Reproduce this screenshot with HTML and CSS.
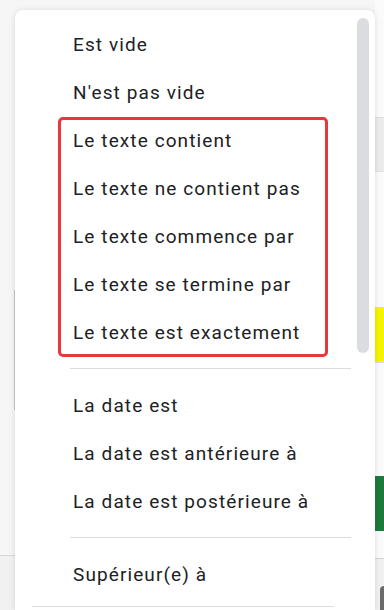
FILE: index.html
```html
<!DOCTYPE html>
<html lang="fr">
<head>
    <meta charset="UTF-8">
    <meta name="viewport" content="width=device-width, initial-scale=1.0">
    <title>Conditions de filtre</title>
    <link rel="stylesheet" href="styles.css">
</head>
<body>
    <div class="sheet-left">
        <div class="gap" style="height: 290px"></div>
        <div class="v-rule"></div>
        <div class="gap" style="height: 145px"></div>
        <div class="footer-band"></div>
    </div>

    <div class="menu">
        <div class="scrollbar"></div>
        <div class="item">Est vide</div>
        <div class="item">N'est pas vide</div>
        <div class="group highlighted">
            <div class="item">Le texte contient</div>
            <div class="item">Le texte ne contient pas</div>
            <div class="item">Le texte commence par</div>
            <div class="item">Le texte se termine par</div>
            <div class="item">Le texte est exactement</div>
        </div>
        <div class="divider"></div>
        <div class="item">La date est</div>
        <div class="item">La date est antérieure à</div>
        <div class="item">La date est postérieure à</div>
        <div class="divider"></div>
        <div class="item">Supérieur(e) à</div>
        <div class="divider short"></div>
    </div>

    <div class="sheet-right">
        <div class="gap" style="height: 117px"></div>
        <div class="cell header"></div>
        <div class="gap" style="height: 135px"></div>
        <div class="cell yellow"></div>
        <div class="gap" style="height: 113px"></div>
        <div class="cell green"></div>
        <div class="gap" style="height: 27px"></div>
        <div class="footer-band">
            <div class="chip"></div>
        </div>
    </div>
</body>
</html>
```

FILE: styles.css
```css
:root {
    --page-bg: #f6f6f6;
    --text-color: #202124;
    --rule-color: #dadce0;
    --accent-red: #e5393f;
}

body {
    margin: 0;
    height: 610px;
    overflow: hidden;
    display: flex;
    background-color: var(--page-bg);
    font-family: Roboto, 'Liberation Sans', sans-serif;
    color: var(--text-color);
}

.gap {
    flex-shrink: 0;
}

/* sheet visible around the menu */
.sheet-left {
    width: 15px;
    flex-shrink: 0;
    display: flex;
    flex-direction: column;
}

.v-rule {
    height: 120px;
    width: 1px;
    margin-left: 14px;
    background-color: #c8c8c8;
}

.footer-band {
    flex: 1;
    border-top: 1px solid #d6d6d6;
    background-color: #f1f1f1;
}

.sheet-right {
    width: 9px;
    flex-shrink: 0;
    display: flex;
    flex-direction: column;
    background-color: #fbfbfb;
}

.cell {
    flex-shrink: 0;
}

.cell.header {
    height: 53px;
    border-top: 1px solid #dedede;
    border-bottom: 1px solid #e2e2e2;
    background-color: #ececec;
}

.cell.yellow {
    height: 55px;
    background-color: #f5f500;
    border-bottom: 1px solid #dcdcdc;
}

.cell.green {
    height: 55px;
    background-color: #1e7b3c;
}

.chip {
    margin: 27px 0 0 5px;
    height: 40px;
    border-radius: 4px 0 0 4px;
    background-color: #6b6b6b;
}

/* the dropdown */
.menu {
    position: relative;
    width: 360px;
    flex-shrink: 0;
    margin-top: 10px;
    padding-top: 10px;
    background-color: #fff;
    border-radius: 8px 8px 0 0;
    box-shadow: 0 0 4px rgba(0,0,0,0.08), 0 1px 10px rgba(0,0,0,0.06);
}

.item {
    height: 48px;
    display: flex;
    align-items: center;
    padding-left: 58px;
    font-size: 19px;
    letter-spacing: 1.1px;
    white-space: nowrap;
}

.group {
    position: relative;
}

.group.highlighted::after {
    content: '';
    position: absolute;
    top: 1px;
    bottom: -1px;
    left: 43px;
    width: 270px;
    border: 3px solid var(--accent-red);
    border-radius: 5px;
    box-sizing: border-box;
}

.divider {
    height: 1px;
    margin: 12px 24px 12px 55px;
    background-color: var(--rule-color);
}

.divider.short {
    margin: 8px 41px 0 17px;
}

.scrollbar {
    position: absolute;
    top: 8px;
    right: 6px;
    width: 12px;
    height: 335px;
    border-radius: 6px;
    background-color: #dadce0;
}
```
